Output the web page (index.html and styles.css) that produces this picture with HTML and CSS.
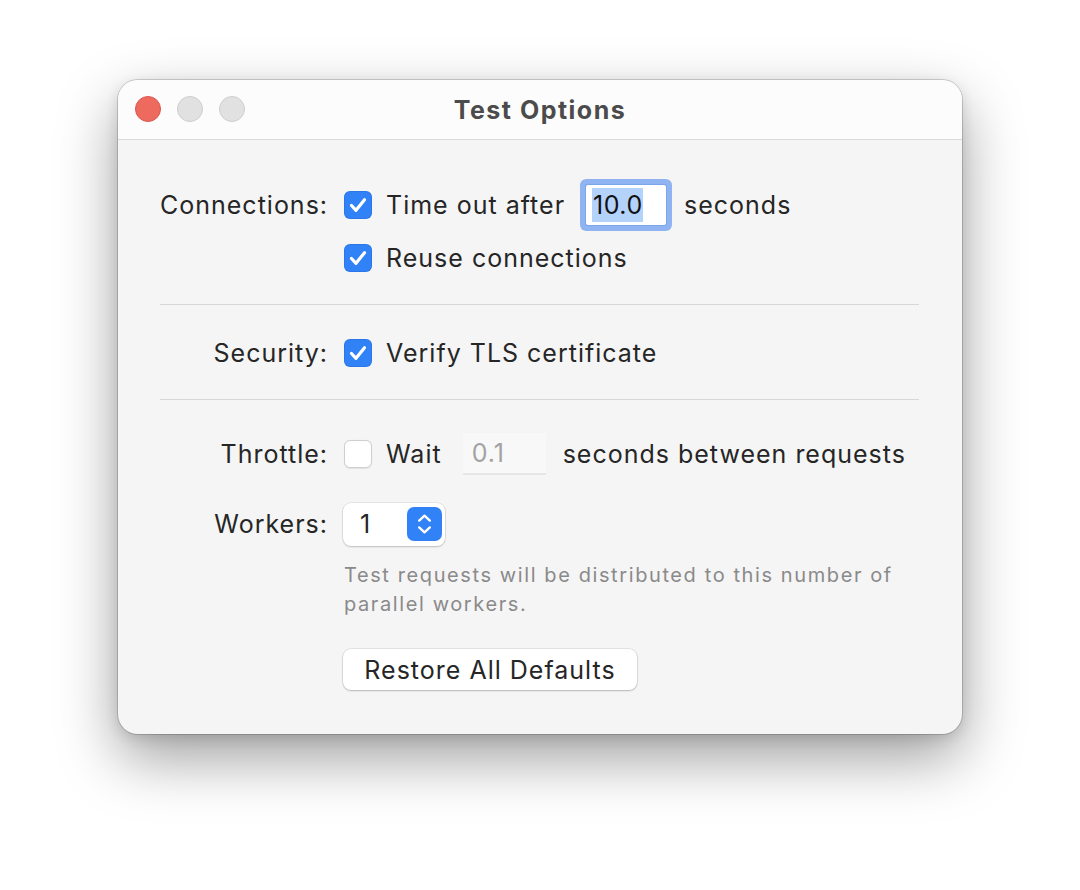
FILE: index.html
```html
<!DOCTYPE html>
<html lang="en">
<head>
<meta charset="utf-8">
<title>Test Options</title>
<link rel="stylesheet" href="styles.css">
</head>
<body>
<div class="window">
  <div class="titlebar">
    <div class="lights">
      <span class="light red"></span>
      <span class="light gray"></span>
      <span class="light gray"></span>
    </div>
    <div class="title">Test Options</div>
  </div>
  <div class="content">
    <div class="row row-field">
      <div class="label">Connections:</div>
      <div class="controls">
        <span class="check on"><svg viewBox="0 0 28 28"><path d="M7.5 14.5l4.5 4.8 8.5-10.6" /></svg></span>
        <span class="text">Time out after</span>
        <span class="field focus"><span class="sel">10.0</span></span>
        <span class="text after">seconds</span>
      </div>
    </div>
    <div class="row row-small r2">
      <div class="label"></div>
      <div class="controls">
        <span class="check on"><svg viewBox="0 0 28 28"><path d="M7.5 14.5l4.5 4.8 8.5-10.6" /></svg></span>
        <span class="text">Reuse connections</span>
      </div>
    </div>
    <div class="sep s1"></div>
    <div class="row row-small r3">
      <div class="label">Security:</div>
      <div class="controls">
        <span class="check on"><svg viewBox="0 0 28 28"><path d="M7.5 14.5l4.5 4.8 8.5-10.6" /></svg></span>
        <span class="text">Verify TLS certificate</span>
      </div>
    </div>
    <div class="sep s2"></div>
    <div class="row row-throttle">
      <div class="label">Throttle:</div>
      <div class="controls">
        <span class="check off"></span>
        <span class="text">Wait</span>
        <span class="field disabled">0.1</span>
        <span class="text after2">seconds between requests</span>
      </div>
    </div>
    <div class="row row-workers">
      <div class="label">Workers:</div>
      <div class="controls">
        <span class="popup">
          <span class="popup-value">1</span>
          <span class="stepper"><svg viewBox="0 0 36 34"><path d="M12.5 13.5l5.5-5 5.5 5M12.5 20.5l5.5 5 5.5-5" /></svg></span>
        </span>
      </div>
    </div>
    <div class="help">Test requests will be distributed to this number of parallel workers.</div>
    <div class="btn-row">
      <button class="button">Restore All Defaults</button>
    </div>
  </div>
</div>
</body>
</html>
```
FILE: styles.css
```css
html, body {
  margin: 0;
  padding: 0;
  background: #ffffff;
}
body {
  width: 1080px;
  height: 890px;
  overflow: hidden;
  font-family: Inter, "Noto Sans", "Liberation Sans", sans-serif;
  color: #262626;
}
.window {
  margin: 80px 0 0 118px;
  width: 844px;
  height: 654px;
  box-sizing: border-box;
  border-radius: 20px;
  background: #f5f5f5;
  box-shadow: 0 0 0 1px rgba(0,0,0,0.16), 0 24px 60px rgba(0,0,0,0.38), 0 4px 14px rgba(0,0,0,0.12);
  overflow: hidden;
  display: flex;
  flex-direction: column;
}
.titlebar {
  height: 59px;
  flex: none;
  background: #fcfcfc;
  border-bottom: 1px solid #d9d9d9;
  display: flex;
  align-items: center;
  justify-content: center;
  position: relative;
}
.lights {
  position: absolute;
  left: 17px;
  top: 16px;
  display: flex;
  gap: 16px;
}
.light {
  width: 26px;
  height: 26px;
  border-radius: 50%;
  box-sizing: border-box;
}
.light.red {
  background: #ee6a5f;
  border: 1px solid #d9574c;
}
.light.gray {
  background: #e1e1e1;
  border: 1px solid #cdcdcd;
}
.title {
  font-size: 25px;
  font-weight: 700;
  color: #4b4b4b;
  letter-spacing: 1.5px;
}
.content {
  padding: 39px 43px 0 42px;
  display: flex;
  flex-direction: column;
}
.row {
  display: flex;
  align-items: center;
}
.label {
  width: 168px;
  flex: none;
  text-align: right;
  font-size: 25px;
  letter-spacing: 1px;
  padding-right: 16px;
  box-sizing: content-box;
}
.controls {
  display: flex;
  align-items: center;
  font-size: 25px;
  letter-spacing: 1px;
}
.row-field { height: 52px; }
.row-small { height: 28px; }
.r2 { margin-top: 13px; }
.sep {
  height: 1px;
  background: #d8d8d8;
}
.s1 { margin-top: 32px; }
.r3 { margin-top: 34px; }
.s2 { margin-top: 32px; }
.row-throttle { height: 42px; margin-top: 33px; }
.row-workers { height: 44px; margin-top: 27px; }

.check {
  width: 28px;
  height: 28px;
  border-radius: 6px;
  box-sizing: border-box;
  flex: none;
  display: flex;
  align-items: center;
  justify-content: center;
}
.check.on {
  background: #3182f6;
  box-shadow: inset 0 0 0 1px rgba(0,60,160,0.15);
}
.check svg {
  width: 28px;
  height: 28px;
}
.check svg path {
  fill: none;
  stroke: #ffffff;
  stroke-width: 3.2;
  stroke-linecap: round;
  stroke-linejoin: round;
}
.check.off {
  background: #ffffff;
  border: 1px solid #cfcfcf;
  box-shadow: 0 0.5px 1px rgba(0,0,0,0.08);
}
.text {
  margin-left: 14px;
  white-space: nowrap;
}
.field {
  box-sizing: border-box;
  display: flex;
  align-items: center;
  flex: none;
}
.field.focus {
  width: 80px;
  height: 40px;
  margin-left: 21px;
  background: #ffffff;
  box-shadow: 0 0 0 1px #7aa6ec, 0 0 0 6px #8fb4f1;
  border-radius: 2px;
  padding-left: 6px;
}
.sel {
  background: #b4d3fb;
  color: #111;
  padding: 1px 0 1px 1px;
  line-height: 32px;
  letter-spacing: 0.5px;
}
.after { margin-left: 18px; }
.field.disabled {
  width: 83px;
  height: 42px;
  margin-left: 21px;
  background: #f8f8f8;
  border-bottom: 2px solid #e6e6e6;
  color: #a3a3a3;
  padding-left: 9px;
}
.after2 { margin-left: 17px; }

.popup {
  width: 102px;
  height: 43px;
  box-sizing: border-box;
  margin-left: -1px;
  background: #ffffff;
  border-radius: 8px;
  box-shadow: 0 0 0 0.5px rgba(0,0,0,0.12), 0 1px 2px rgba(0,0,0,0.18);
  display: flex;
  align-items: center;
  justify-content: space-between;
  padding: 0 3px 0 17px;
}
.popup-value { font-size: 25px; }
.stepper {
  width: 35px;
  height: 34px;
  border-radius: 7px;
  background: #3182f6;
  display: flex;
}
.stepper svg { width: 35px; height: 34px; }
.stepper svg path {
  fill: none;
  stroke: #ffffff;
  stroke-width: 2.4;
  stroke-linecap: round;
  stroke-linejoin: round;
}
.help {
  margin-left: 184px;
  margin-top: 15px;
  width: 575px;
  font-size: 20px;
  line-height: 29px;
  letter-spacing: 1.6px;
  color: #8a8a8a;
}
.btn-row {
  margin-left: 183px;
  margin-top: 30px;
  display: flex;
}
.button {
  width: 294px;
  height: 41px;
  border: none;
  border-radius: 8px;
  background: #ffffff;
  box-shadow: 0 0 0 0.5px rgba(0,0,0,0.14), 0 1px 2px rgba(0,0,0,0.2);
  font-family: inherit;
  font-size: 25px;
  letter-spacing: 1px;
  color: #262626;
  padding: 0;
}
```
